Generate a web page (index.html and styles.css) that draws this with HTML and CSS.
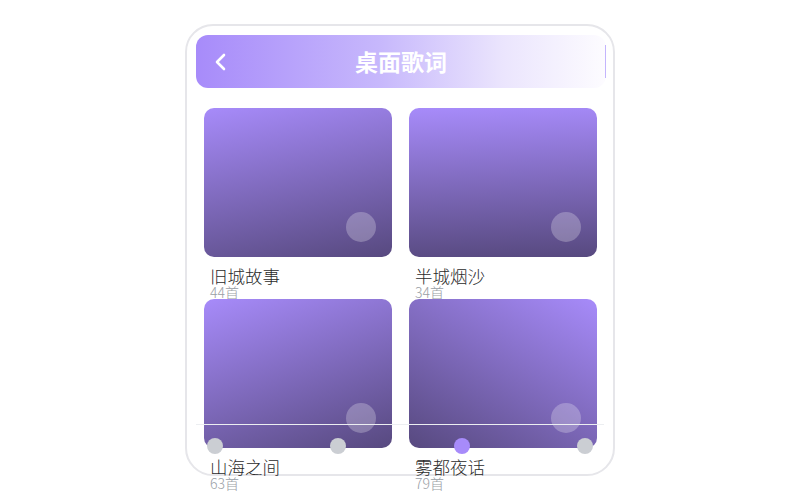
FILE: index.html
```html
<!DOCTYPE html>
<html lang="zh-CN">
<head>
    <meta charset="UTF-8">
    <meta name="viewport" content="width=device-width, initial-scale=1.0">
    <title>桌面歌词</title>
    <link rel="stylesheet" href="styles.css">
</head>
<body>
<div class="phone">
    <header class="topbar">
        <svg class="back" width="14" height="20" viewBox="0 0 14 20">
            <path d="M10 3 L3 10 L10 17" fill="none" stroke="#fff" stroke-width="2.6" stroke-linecap="round" stroke-linejoin="round"/>
        </svg>
        <h1>桌面歌词</h1>
        <span class="edge"></span>
    </header>
    <div class="grid">
        <div class="item">
            <div class="cover c1"><span class="dot"></span></div>
            <p class="name">旧城故事</p>
            <p class="count">44首</p>
        </div>
        <div class="item">
            <div class="cover c2"><span class="dot"></span></div>
            <p class="name">半城烟沙</p>
            <p class="count">34首</p>
        </div>
        <div class="item">
            <div class="cover c3"><span class="dot"></span></div>
            <p class="name">山海之间</p>
            <p class="count">63首</p>
        </div>
        <div class="item">
            <div class="cover c4"><span class="dot"></span></div>
            <p class="name">雾都夜话</p>
            <p class="count">79首</p>
        </div>
    </div>
    <div class="rail"></div>
    <div class="pager">
        <span></span>
        <span></span>
        <span class="on"></span>
        <span></span>
    </div>
</div>
</body>
</html>
```

FILE: styles.css
```css
html, body {
    min-height: 500px;
}
body {
    margin: 0;
    background: #fff;
    font-family: "Noto Sans CJK SC", "Noto Sans", sans-serif;
}
.phone {
    position: relative;
    box-sizing: border-box;
    width: 430px;
    height: 452px;
    margin: 24px auto 0;
    padding: 9px 0 0 9px;
    border: 2px solid #e6e6ea;
    border-radius: 28px;
}
.topbar {
    position: relative;
    display: flex;
    align-items: center;
    justify-content: center;
    width: 410px;
    height: 53px;
    border-radius: 12px;
    background: linear-gradient(90deg, #a78bfa 0%, #c7b8fc 45%, #ebe5fd 75%, #fdfcff 100%);
}
.back {
    position: absolute;
    left: 18px;
    top: 17px;
}
.topbar h1 {
    margin: 0;
    color: #fff;
    font-size: 23px;
    font-weight: 700;
    line-height: 1;
}
.edge {
    position: absolute;
    right: 0;
    top: 10px;
    width: 1px;
    height: 33px;
    background: #c4b5fd;
}
.grid {
    display: grid;
    grid-template-columns: 188px 188px;
    column-gap: 17px;
    margin: 20px 0 0 8px;
}
.item {
    display: flex;
    flex-direction: column;
}
.cover {
    position: relative;
    height: 149px;
    border-radius: 10px;
}
.c1 { background: linear-gradient(168deg, #a78bfa 0%, #57497f 100%); }
.c2 { background: linear-gradient(178deg, #a78bfa 0%, #57497f 100%); }
.c3 { background: linear-gradient(160deg, #a78bfa 0%, #57497f 100%); }
.c4 { background: linear-gradient(210deg, #a78bfa 0%, #57497f 100%); }
.dot {
    position: absolute;
    right: 16px;
    bottom: 15px;
    width: 30px;
    height: 30px;
    border-radius: 50%;
    background: rgba(255, 255, 255, 0.25);
}
.name {
    margin: 10px 0 0 6px;
    color: #2b2b2b;
    font-size: 17.5px;
    font-weight: 300;
    line-height: 18px;
}
.count {
    margin: 0 0 0 6px;
    color: #999ea5;
    font-size: 14px;
    font-weight: 300;
    line-height: 14px;
}
.rail {
    position: absolute;
    left: 9px;
    top: 398px;
    width: 408px;
    height: 1px;
    background: #eceef1;
}
.pager {
    position: absolute;
    left: 20px;
    top: 412px;
    width: 386px;
    display: flex;
    justify-content: space-between;
}
.pager span {
    width: 16px;
    height: 16px;
    border-radius: 50%;
    background: #cbced3;
}
.pager span.on {
    background: #a78bfa;
}
```
